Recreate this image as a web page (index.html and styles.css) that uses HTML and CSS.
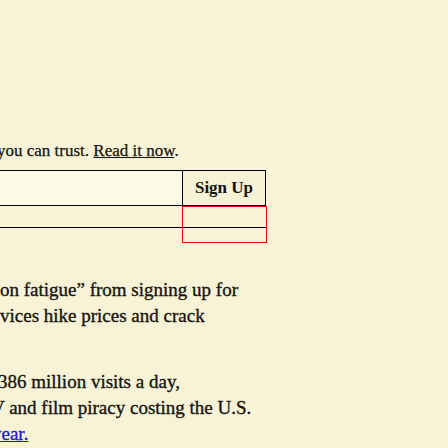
FILE: index.html
```html
<!DOCTYPE html>
<html lang="en">
<head>
<meta charset="utf-8">
<title>Newsletter</title>
<link rel="stylesheet" href="styles.css">
</head>
<body>
<main class="page">
  <p class="intro"><span class="line shift-y">you can trust. <a class="read" href="#">Read it now</a>.</span></p>

  <form class="signup">
    <div class="row-main">
      <div class="field"></div>
      <button type="button" class="btn">Sign Up</button>
    </div>
    <div class="row-extra">
      <div class="extra-left"></div>
      <div class="extra-right"><div class="extra-inner"></div></div>
    </div>
  </form>

  <p class="story">
    <span class="line">on fatigue” from signing up for</span>
    <span class="line">vices hike prices and crack</span>
  </p>
  <p class="story second">
    <span class="line shift-3">386 million visits a day,</span>
    <span class="line shift-v">V and film piracy costing the U.S.</span>
    <span class="line shift-yr"><a class="blue" href="#">year.</a></span>
  </p>
</main>
</body>
</html>
```

FILE: styles.css
```css
html, body {
  margin: 0;
  padding: 0;
  background: #f8f3d7;
}
body {
  width: 448px;
  height: 448px;
  overflow: hidden;
  font-family: "Liberation Serif", "Times New Roman", serif;
  color: #16140f;
}
.page {
  padding-top: 139px;
}
.line {
  display: block;
  white-space: nowrap;
}
.intro {
  margin: 0;
  font-size: 17px;
  line-height: 24px;
  -webkit-text-stroke: 0.25px #16140f;
}
.read {
  color: #16140f;
  text-decoration: underline;
}
.shift-y { margin-left: -3px; }
.shift-3 { margin-left: -2px; }
.shift-v { margin-left: -9px; }
.shift-yr { margin-left: -8px; }

.signup {
  margin: 7px 0 0 -20px;
  width: 286px;
}
.row-main {
  display: flex;
  border-top: 1px solid #000;
  border-bottom: 1px solid #000;
  height: 34px;
}
.field {
  flex: 1;
  background: #fcf9e6;
}
.btn {
  width: 84px;
  box-sizing: border-box;
  border: 0;
  border-left: 1px solid #000;
  border-right: 1px solid #000;
  background: #f7f2d6;
  font-family: "Liberation Serif", "Times New Roman", serif;
  font-weight: 700;
  font-size: 17px;
  color: #16140f;
  padding: 0;
}
.row-extra {
  display: flex;
  margin-right: -1px;
  align-items: flex-start;
}
.extra-left {
  flex: 1;
  height: 21px;
  border-bottom: 1px solid #000;
}
.extra-right {
  width: 85px;
  height: 37px;
  box-sizing: border-box;
  border: 1px solid #ff0000;
}
.extra-inner {
  height: 20px;
  border-bottom: 1px solid #000;
}
.story {
  margin: 34px 0 0;
  font-size: 19px;
  line-height: 26px;
  -webkit-text-stroke: 0.35px #16140f;
}
.story.second {
  margin-top: 40px;
}
.blue {
  color: #1a1ad6;
  text-decoration: underline;
  -webkit-text-stroke: 0.35px #1a1ad6;
}
```
